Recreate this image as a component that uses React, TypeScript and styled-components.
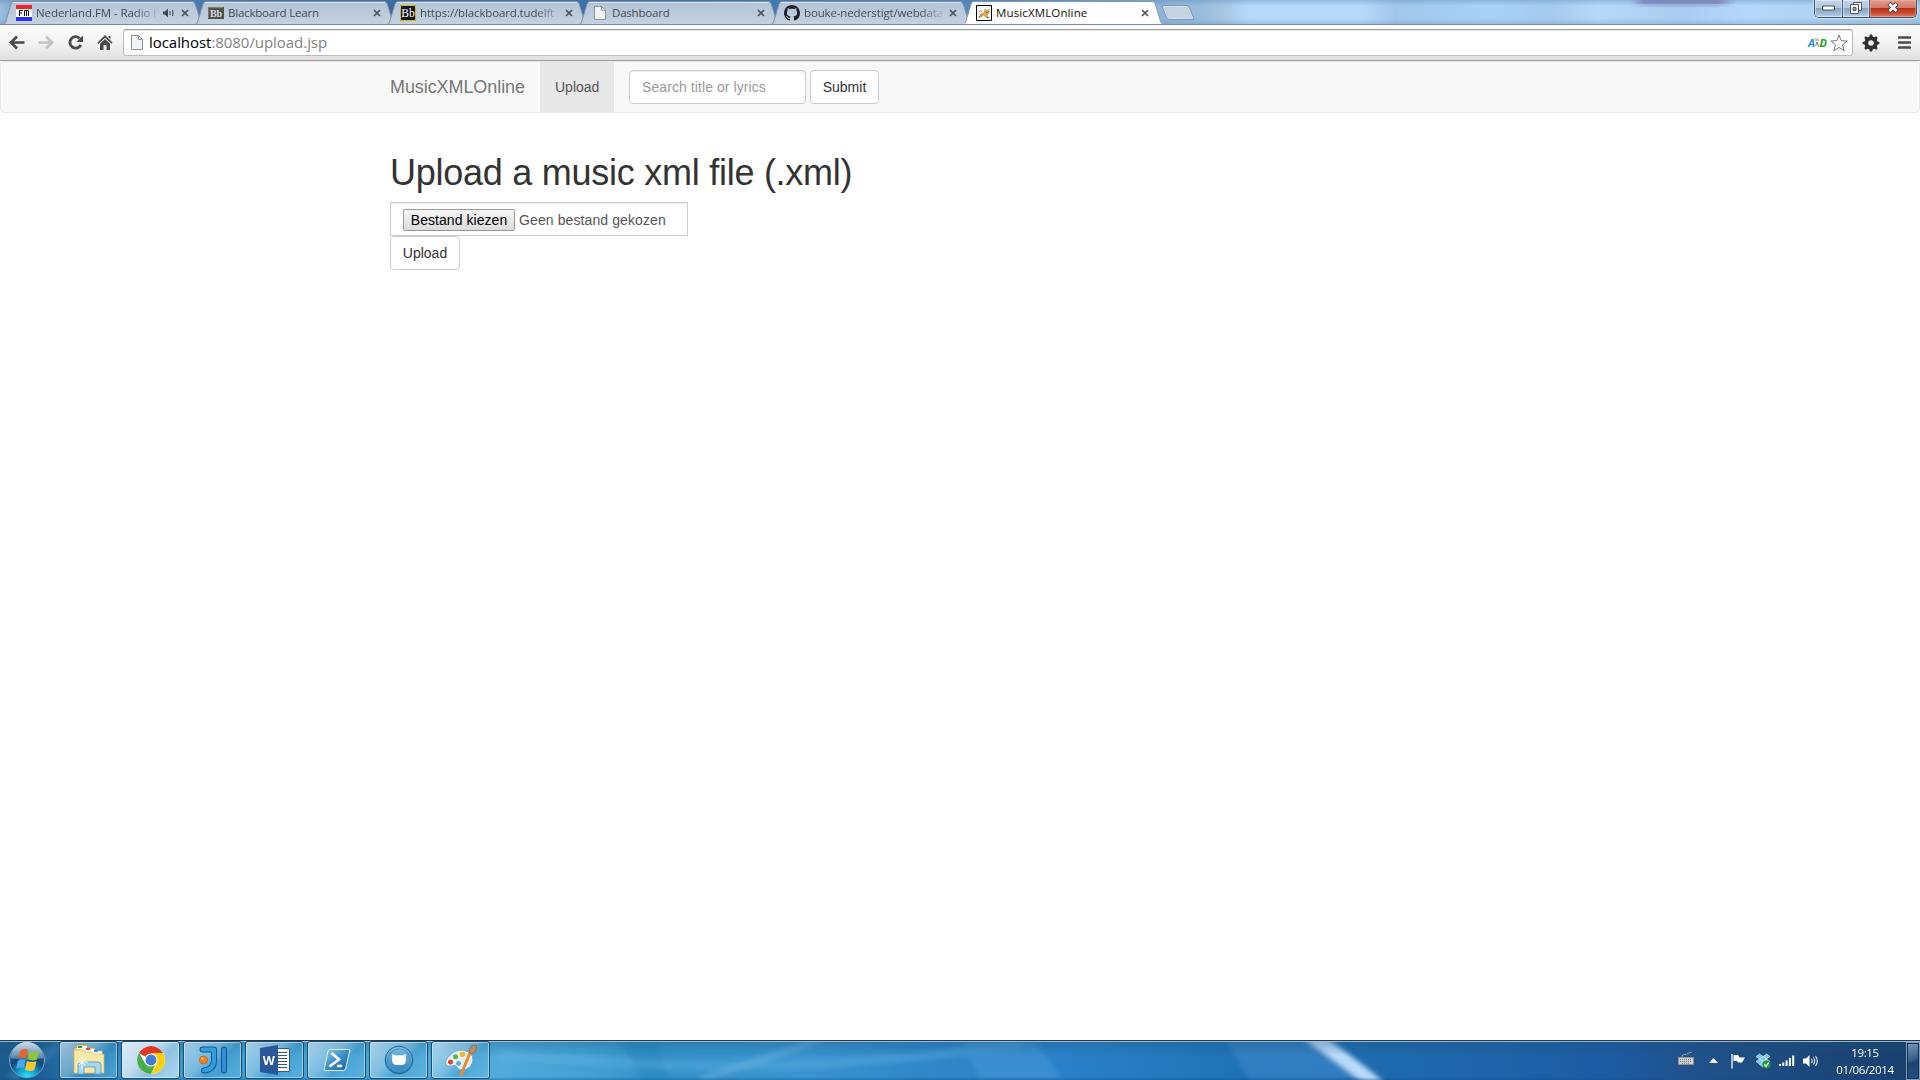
import React from "react";
import styled, { createGlobalStyle } from "styled-components";

const UI = '"Open Sans", "Noto Sans", sans-serif';
const PAGE = '"Liberation Sans", Arial, sans-serif';

const Global = createGlobalStyle`
  *, *::before, *::after { box-sizing: border-box; }
  html, body { margin: 0; padding: 0; background: #fff; overflow: hidden; }
  svg { display: block; flex: none; }
`;

const Screen = styled.div`
  display: flex;
  flex-direction: column;
  width: 1920px;
  height: 1080px;
  font-family: ${UI};
`;

/* ---------- browser frame ---------- */

const TabStrip = styled.div`
  display: flex;
  flex: none;
  height: 24px;
  padding-left: 3px;
  background:
    linear-gradient(90deg, transparent 1630px, rgba(110, 105, 165, 0.6) 1645px, rgba(110, 105, 165, 0.6) 1718px, transparent 1735px) 0 0 / 100% 4px no-repeat,
    linear-gradient(90deg, transparent 1630px, rgba(120, 125, 185, 0.3) 1650px, rgba(120, 125, 185, 0.3) 1712px, transparent 1735px) 0 4px / 100% 3px no-repeat,
    linear-gradient(180deg, rgba(70, 120, 175, 0.3), transparent 25%, transparent 75%, rgba(90, 130, 175, 0.25)),
    linear-gradient(90deg, #9dbedd 0, #83a9cd 15px, #4a7cad 190px, #39699e 400px, #3c74ad 700px, #5486b8 960px,
      #8fb6dc 1165px, #98bcde 1200px, #a6c4e0 1222px, #b6dafc 1250px, #b6dafc 1360px, #a1c7ea 1395px, #a9d2f8 1490px,
      #a5caee 1550px, #b6d8fa 1600px, #a9cdf0 1680px, #b4d8fb 1750px, #a8c8e6 1920px);
`;

const TabBox = styled.div`
  display: grid;
  grid-template-columns: 200px;
  flex: none;
  width: 200px;
  height: 24px;
  margin-right: -8px;
  & > * { grid-area: 1 / 1; }
`;

const TabRow = styled.div`
  display: flex;
  align-items: center;
  height: 24px;
  padding: 2px 14px 0 13px;
`;

const Favicon = styled.div`
  display: flex;
  justify-content: center;
  align-items: center;
  flex: none;
  width: 16px;
  height: 16px;
`;

const TabTitle = styled.div<{ $active?: boolean; $fade?: boolean; $ls: number }>`
  flex: 1;
  min-width: 0;
  margin-left: 4px;
  white-space: nowrap;
  font-size: 11.5px;
  line-height: 18px;
  letter-spacing: ${(p) => p.$ls}px;
  color: ${(p) => (p.$active ? "#111" : "#454b55")};
  ${(p) => p.$fade && "mask-image: linear-gradient(90deg, #000 calc(100% - 22px), rgba(0, 0, 0, 0.15));"}
`;

const TabEnd = styled.div<{ $gap: number }>`
  display: flex;
  align-items: center;
  gap: 7px;
  margin-left: ${(p) => p.$gap}px;
`;

const NewTab = styled.div`
  flex: none;
  width: 28px;
  height: 15px;
  margin: 5px 0 0 9px;
  transform: skewX(22deg);
  border: 1px solid #8099b4;
  border-radius: 3px;
  background: #c3d3e4;
  box-shadow: inset 0 0 0 1px #d1dfed;
`;

const WindowButtons = styled.div`
  display: flex;
  width: 103px;
  height: 18px;
  margin: 0 3px 0 auto;
  border: 1px solid #3f5169;
  border-top: 0;
  border-radius: 0 0 5px 5px;
  overflow: hidden;
  box-shadow: 0 0 0 1px rgba(225, 240, 255, 0.6);
`;

const WindowButton = styled.div<{ $w: number; $close?: boolean }>`
  display: flex;
  align-items: center;
  justify-content: center;
  width: ${(p) => p.$w}px;
  padding-bottom: 2px;
  border-right: ${(p) => (p.$close ? 0 : 1)}px solid #4d617b;
  box-shadow: inset 0 0 0 1px ${(p) => (p.$close ? "rgba(255,180,160,.5)" : "rgba(235,245,255,.55)")};
  background: ${(p) =>
    p.$close
      ? "linear-gradient(180deg, #dda092 0, #cf7a68 45%, #b8301a 50%, #c9482c 75%, #dc8168 100%)"
      : "linear-gradient(180deg, #c5d5e8 0, #b4c8de 45%, #8ba5c2 50%, #9bb6d3 75%, #bdd4ea 100%)"};
`;

const Toolbar = styled.div`
  display: flex;
  align-items: center;
  flex: none;
  height: 37px;
  padding: 0 9px 0 9px;
  border-top: 1px solid #7489a0;
  border-bottom: 1px solid #a0a0a0;
  background: linear-gradient(180deg, #fdfdfd, #f3f3f3 50%, #e0e0e0);
`;

const NavIcons = styled.div`
  display: flex;
  gap: 13.4px;
  width: 114px;
`;

const Omnibox = styled.div`
  display: flex;
  align-items: center;
  width: 1730px;
  height: 27px;
  padding: 0 4px 0 7px;
  border: 1px solid #bcbcbc;
  border-top-color: #9c9c9c;
  border-radius: 3px;
  background: #fff;
  box-shadow: inset 0 1px 0 #e8e8e8;
`;

const Address = styled.div`
  flex: 1;
  margin-left: 6px;
  padding-bottom: 1px;
  font-size: 15px;
  line-height: 21px;
  letter-spacing: -0.05px;
  color: #838383;
  white-space: nowrap;
`;

const Host = styled.span`
  color: #000;
`;

const Dictionary = styled.div`
  display: flex;
  align-items: center;
  width: 19px;
  margin-right: 3px;
  font: italic bold 11px/14px ${UI};
  color: #1a8fe0;
`;

const DictionaryTo = styled.span`
  color: #27a01d;
  margin-left: auto;
`;

const RightIcons = styled.div`
  display: flex;
  align-items: center;
  gap: 18px;
  margin-left: 9px;
`;

/* ---------- web page ---------- */

const Page = styled.div`
  flex: 1;
  background: #fff;
  font: 14px/20px ${PAGE};
  color: #333;
`;

const Navbar = styled.div`
  display: flex;
  height: 52px;
  padding-left: 374px;
  border: 1px solid #e7e7e7;
  border-radius: 4px;
  background: #f8f8f8;
`;

const Brand = styled.div`
  width: 165px;
  padding: 15px;
  font-size: 18px;
  letter-spacing: -0.08px;
  color: #777;
`;

const NavItem = styled.div`
  width: 74px;
  padding: 15px;
  background: #e7e7e7;
  color: #555;
`;

const SearchForm = styled.div`
  display: flex;
  gap: 4px;
  padding: 8px 15px;
`;

const SearchInput = styled.input`
  width: 177px;
  height: 34px;
  padding: 6px 12px;
  border: 1px solid #ccc;
  border-radius: 4px;
  background: #fff;
  box-shadow: inset 0 1px 1px rgba(0, 0, 0, 0.075);
  font: 14px/20px ${PAGE};
  letter-spacing: 0.08px;
  &::placeholder { color: #999; opacity: 1; }
`;

const Button = styled.button<{ $w: number }>`
  display: block;
  width: ${(p) => p.$w}px;
  height: 34px;
  padding: 0;
  border: 1px solid #ccc;
  border-radius: 4px;
  background: #fff;
  font: 14px/20px ${PAGE};
  color: #333;
`;

const Container = styled.div`
  width: 1170px;
  margin: 40px auto 0;
  padding: 0 15px;
`;

const Heading = styled.h1`
  margin: 0 0 9px;
  font-size: 36px;
  font-weight: 400;
  line-height: 40px;
  letter-spacing: -0.26px;
  color: #333;
`;

const FileField = styled.div`
  display: flex;
  align-items: center;
  width: 298px;
  height: 34px;
  padding: 2px 12px 0;
  border: 1px solid #ccc;
  box-shadow: inset 0 1px 1px rgba(0, 0, 0, 0.075);
  letter-spacing: 0.1px;
  color: #555;
`;

const ChooseButton = styled.div`
  width: 112px;
  height: 22px;
  margin-right: 4px;
  border: 1px solid #999;
  border-radius: 2px;
  background: linear-gradient(180deg, #f6f6f6, #dcdcdc);
  text-align: center;
  letter-spacing: 0.05px;
  color: #000;
`;

/* ---------- taskbar ---------- */

const TaskbarBox = styled.div`
  display: grid;
  flex: none;
  height: 40px;
  & > * { grid-area: 1 / 1; }
`;

const Taskbar = styled.div`
  display: flex;
  height: 40px;
  z-index: 1;
`;

const Start = styled.div`
  display: flex;
  justify-content: center;
  width: 59px;
  padding: 1px 5px 0 0;
`;

const Tasks = styled.div`
  display: flex;
  gap: 3px;
  padding-top: 1px;
`;

const Task = styled.div<{ $on?: boolean }>`
  display: flex;
  align-items: center;
  justify-content: center;
  width: 59px;
  height: 38px;
  padding: 0 0 1px 0;
  border: 1px solid #1d4b6d;
  border-radius: 3px;
  box-shadow: inset 0 0 0 1px rgba(215, 240, 255, ${(p) => (p.$on ? 0.85 : 0.55)});
  background: ${(p) =>
    p.$on
      ? "linear-gradient(135deg, #dcebf5 0, #c2dcee 40%, #8fc3e3 60%, #a9d6ee 100%)"
      : "linear-gradient(135deg, rgba(225,240,250,.65) 0, rgba(175,215,238,.5) 42%, rgba(85,170,215,.25) 60%, rgba(130,200,235,.35) 100%)"};
`;

const Tray = styled.div`
  display: flex;
  align-items: center;
  margin-left: auto;
  padding-top: 1px;
`;

const TraySlot = styled.div<{ $w: number; $up?: number }>`
  width: ${(p) => p.$w}px;
  padding-bottom: ${(p) => p.$up || 0}px;
`;

const Clock = styled.div`
  width: 82px;
  text-align: center;
  font-size: 11.5px;
  line-height: 17px;
  letter-spacing: -0.35px;
  color: #fff;
`;

const ShowDesktop = styled.div`
  width: 14px;
  height: 38px;
  border: 1px solid #7f9dbd;
  outline: 1px solid #122f50;
  outline-offset: -2px;
  background: linear-gradient(160deg, #7d98b6 0, #36608d 45%, #1c4572 55%, #234f7e);
`;

/* ---------- drawings ---------- */

const TabOutline = styled.svg`
  overflow: visible;
`;

const TabShape = ({ active }: { active?: boolean }) => (
  <TabOutline width="200" height="25" viewBox="0 0 200 25">
    <defs>
      <linearGradient id={active ? "ta" : "tb"} x1="0" y1="0" x2="0" y2="1">
        <stop offset="0" stopColor={active ? "#fff" : "#b3c4d8"} />
        <stop offset="1" stopColor={active ? "#fdfdfd" : "#c3d1e0"} />
      </linearGradient>
    </defs>
    <path
      d="M0 24.5C2 24 2.500 22.500 3 21L8 4Q9 1.500 11 1.500H189Q191.500 1.500 192.300 4L197.500 21C198 22.500 198.500 24 200 24.500"
      fill={`url(#${active ? "ta" : "tb"})`}
      stroke={active ? "#7f97b2" : "#7d92aa"}
    />
    <path d="M9.500 2.500H190" stroke="#fff" strokeOpacity=".5" />
    {active && <path d="M1 24.500H199" stroke="#fdfdfd" strokeWidth="2" />}
  </TabOutline>
);

const CloseX = () => (
  <svg width="8" height="8" viewBox="0 0 8 8">
    <path d="M1 1L7 7M7 1L1 7" stroke="#4c525b" strokeWidth="1.700" />
  </svg>
);

const Speaker = () => (
  <svg width="11" height="10" viewBox="0 0 11 10">
    <path d="M0 3.500H2L5 .5V9.500L2 6.500H0Z" fill="#3f444b" />
    <path d="M7 3V7M9.500 2Q10.500 5 9.500 8" stroke="#3f444b" fill="none" />
  </svg>
);

const FmIcon = () => (
  <svg width="16" height="16" viewBox="0 0 16 16">
    <path d="M0 0H16V16H0Z" fill="#fff" />
    <path d="M0 0H16V4H0Z" fill="#f0252c" />
    <path d="M0 12H16V16H0Z" fill="#2a2ff0" />
    <path d="M3.500 11V5.500H7M3.500 8H6M8.500 11V5.500H12.500V11M10.500 5.500V11" stroke="#111" fill="none" />
  </svg>
);

const BbGrey = () => (
  <svg width="16" height="12" viewBox="0 0 16 12">
    <path d="M0 0H16V12H0Z" fill="#50524f" />
    <path d="M.5 11V.5H15" stroke="#8a7b4c" fill="none" />
    <text x="8" y="10" fontSize="10" fontWeight="700" fontFamily="Liberation Serif" fill="#d5dbe0" textAnchor="middle">Bb</text>
  </svg>
);

const BbBlack = () => (
  <svg width="16" height="16" viewBox="0 0 16 16">
    <path d="M.5 .5H15.500V15.500H.5Z" fill="#10161d" stroke="#d8b51e" />
    <text x="8" y="12" fontSize="11.500" fontFamily="Liberation Serif" fill="#fff" textAnchor="middle">Bb</text>
  </svg>
);

const FileIcon = ({ h = 14 }: { h?: number }) => (
  <svg width="12" height={h} viewBox="0 0 12 15" preserveAspectRatio="none">
    <path d="M.5 .5H7.500L11.500 4.500V14.500H.5Z" fill="#f1f3f5" stroke="#8a8f96" />
    <path d="M7.500 .5V4.500H11.500" fill="none" stroke="#8a8f96" />
  </svg>
);

const GithubIcon = () => (
  <svg width="16" height="16" viewBox="0 0 16 16">
    <path
      fill="#1d2229"
      d="M8 0C3.580 0 0 3.580 0 8c0 3.540 2.290 6.530 5.470 7.590.4.070.55-.17.55-.38 0-.19-.01-.82-.01-1.490-2.010.37-2.530-.49-2.690-.94-.09-.23-.48-.94-.82-1.130-.28-.15-.68-.52-.01-.53.63-.01 1.080.58 1.230.82.72 1.210 1.870.87 2.330.66.07-.52.28-.87.51-1.070-1.780-.2-3.640-.89-3.640-3.950 0-.87.31-1.590.82-2.150-.08-.2-.36-1.020.08-2.120 0 0 .67-.21 2.200.82.64-.18 1.320-.27 2-.27s1.360.09 2 .27c1.530-1.040 2.200-.82 2.200-.82.44 1.100.16 1.920.08 2.120.51.56.82 1.270.82 2.150 0 3.070-1.870 3.750-3.650 3.950.29.25.54.73.54 1.480 0 1.070-.01 1.930-.01 2.200 0 .21.15.46.55.38A8.010 8.010 0 0 0 16 8c0-4.420-3.580-8-8-8z"
    />
  </svg>
);

const TomcatIcon = () => (
  <svg width="16" height="16" viewBox="0 0 16 16">
    <path d="M.5 .5H15.500V15.500H.5Z" fill="#fff" stroke="#000" />
    <path d="M2.500 12.500L5 8.500L8 7L8.500 3.500L10 4.500H12L13.500 3.500V8L11.500 10L13.500 13H10L7.500 10.500L5.500 12.500Z" fill="#d7ac58" />
    <path d="M2.500 7L4.500 5.500L6.500 7M2.500 13L5 9.500M10.500 12.500L13 13M9 6.500L11 8L13 6.500" stroke="#6b5a40" fill="none" strokeWidth=".8" />
  </svg>
);

const Arrow = ({ back }: { back?: boolean }) => (
  <svg width="16" height="15" viewBox="0 0 16 15">
    <path
      d={back ? "M8 1.500L2 7.500L8 13.500M2 7.500H15.500" : "M8 1.500L14 7.500L8 13.500M14 7.500H.5"}
      fill="none"
      stroke={back ? "#4a4a4a" : "#c3c3c3"}
      strokeWidth="2.700"
    />
  </svg>
);

const Reload = () => (
  <svg width="16" height="15" viewBox="0 0 16 15">
    <path d="M12.800 9.800A5.700 5.700 0 1 1 11.700 3.400" fill="none" stroke="#4a4a4a" strokeWidth="2.800" />
    <path d="M15 .5V7H8.500Z" fill="#4a4a4a" />
  </svg>
);

const Home = () => (
  <svg width="16" height="15" viewBox="0 0 16 15">
    <path d="M8 0L15.500 7.500L14.500 8.800L8 2.800L1.500 8.800L.5 7.500ZM11.500 1H13.500V4L11.500 2.500ZM8 4L13 8.700V15H9.500V10H6.500V15H3V8.700Z" fill="#4a4a4a" />
  </svg>
);

const Star = () => (
  <svg width="18" height="18" viewBox="0 0 18 18">
    <path d="M9 1L11.200 6.700L17.200 7L12.500 10.800L14.200 16.700L9 13.400L3.800 16.700L5.500 10.800L.8 7L6.800 6.700Z" fill="#fff" stroke="#777" strokeLinejoin="round" />
  </svg>
);

const Gear = () => (
  <svg width="18" height="18" viewBox="-9 -9 18 18">
    <circle r="4.700" fill="none" stroke="#303030" strokeWidth="3.800" />
    {[0, 45, 90, 135, 180, 225, 270, 315].map((a) => (
      <path key={a} d="M-1.800 -5.800L-1.100 -8.400H1.100L1.800 -5.800Z" fill="#303030" transform={`rotate(${a})`} />
    ))}
  </svg>
);

const MenuIcon = () => (
  <svg width="13" height="13" viewBox="0 0 13 13">
    <path d="M1 1.500H12M1 6.500H12M1 11.500H12" stroke="#4b4b4b" strokeWidth="2.600" strokeLinecap="round" />
  </svg>
);

const TaskbarBackdrop = () => (
  <svg width="1920" height="40" viewBox="0 0 1920 40">
    <defs>
      <linearGradient id="bar">
        <stop offset="0" stopColor="#1d5b8f" />
        <stop offset=".022" stopColor="#1c5f95" />
        <stop offset=".05" stopColor="#2c86bd" />
        <stop offset=".1" stopColor="#3b9bcf" />
        <stop offset=".26" stopColor="#50abdb" />
        <stop offset=".31" stopColor="#419fd2" />
        <stop offset=".34" stopColor="#3592c8" />
        <stop offset=".42" stopColor="#3a94d0" />
        <stop offset=".48" stopColor="#2f87c8" />
        <stop offset=".55" stopColor="#2b82ca" />
        <stop offset=".64" stopColor="#2073b6" />
        <stop offset=".73" stopColor="#1f69ae" />
        <stop offset=".84" stopColor="#1d5ba3" />
        <stop offset=".88" stopColor="#21528c" />
        <stop offset="1" stopColor="#173f6d" />
      </linearGradient>
      <linearGradient id="shade" x1="0" y1="0" x2="0" y2="1">
        <stop offset="0" stopColor="#1a5277" stopOpacity=".35" />
        <stop offset=".4" stopColor="#1a5277" stopOpacity="0" />
        <stop offset=".92" stopColor="#0a4f8c" stopOpacity="0" />
        <stop offset="1" stopColor="#0a4f8c" stopOpacity=".4" />
      </linearGradient>
      <filter id="soft"><feGaussianBlur stdDeviation="2.500" /></filter>
    </defs>
    <path d="M0 0H1920V40H0Z" fill="url(#bar)" />
    <g filter="url(#soft)">
      <path d="M620 0H655L670 40H640Z" fill="#2587bd" opacity=".5" />
      <path d="M820 0L700 40" stroke="#8cc8ef" strokeWidth="7" opacity=".3" />
      <path d="M500 14Q760 42 1020 4" stroke="#6db8e8" strokeWidth="9" fill="none" opacity=".3" />
      <path d="M962 0H1035L1062 40H980Z" fill="#4596d6" opacity=".6" />
      <path d="M1225 0H1305L1370 40H1250Z" fill="#3f86c9" opacity=".65" />
      <path d="M10 40L60 5" stroke="#4f93c2" strokeWidth="10" opacity=".35" />
      <path d="M1309 -6Q1346 20 1378 46" stroke="#b9daf9" strokeWidth="14" fill="none" />
    </g>
    <path d="M0 0H1920V40H0Z" fill="url(#shade)" />
    <path d="M0 .5H1920" stroke="#22384e" />
    <path d="M0 1.500H1920" stroke="#a9cbe2" strokeOpacity=".85" />
  </svg>
);

const Orb = () => (
  <svg width="38" height="38" viewBox="0 0 38 38">
    <defs>
      <radialGradient id="orb" cx=".5" cy="1" r=".95">
        <stop offset="0" stopColor="#1df0ff" />
        <stop offset=".3" stopColor="#149bd0" />
        <stop offset=".6" stopColor="#0c4678" />
        <stop offset="1" stopColor="#5b87a8" />
      </radialGradient>
      <linearGradient id="gloss" x1="0" y1="0" x2="0" y2="1">
        <stop offset="0" stopColor="#dbe8f0" stopOpacity=".85" />
        <stop offset="1" stopColor="#b8d0e0" stopOpacity=".3" />
      </linearGradient>
    </defs>
    <circle cx="19" cy="19" r="17.500" fill="url(#orb)" stroke="#75a5c4" />
    <path d="M3 17A16 16 0 0 1 35 17Q19 21 3 17Z" fill="url(#gloss)" />
    <path d="M12.500 9.500Q16 7 20 9L18 17.500Q14 15.500 10.500 17.500Z" fill="#e8622a" />
    <path d="M21.500 10Q26 12 31 9.500L29 18.500Q24.500 20.500 19.500 18Z" fill="#8cc63e" />
    <path d="M10 19.500Q14 17.500 17.500 19L15.500 27.500Q12 26 8 28Z" fill="#4aa8e8" />
    <path d="M19 20Q23.500 22 28.500 20.300L26.300 29Q21.500 31 17 28.500Z" fill="#fbc62a" />
  </svg>
);

const Explorer = () => (
  <svg width="34" height="32" viewBox="0 0 34 32">
    <path d="M2 4H5V1H15V4H23V7H30V29H3Z" fill="#f3dc8a" stroke="#b89a45" strokeWidth=".8" />
    <path d="M5 2H15V5H5Z" fill="#fff" />
    <path d="M6 2H10V4H6Z" fill="#27a53b" />
    <path d="M11 5H22V8H11Z" fill="#fff" />
    <path d="M14 4H18V6H14Z" fill="#e1442c" />
    <path d="M19 7H30V10H19Z" fill="#fff" />
    <path d="M22 6H26V8H22Z" fill="#2a8fe0" />
    <path d="M2 6H11L13 8H20L22 10H32V29H2Z" fill="#f8e8a5" stroke="#d0b562" strokeWidth=".7" />
    <path d="M6 30V21Q6 18 9 18H26Q29 18 29 21V30H23V23H12V30Z" fill="#a5d6ee" stroke="#5b9fc8" strokeWidth=".9" />
    <path d="M10 12V25M5 18H16M7 15L13 21M13 15L7 21" stroke="#fff" strokeWidth=".9" />
  </svg>
);

const Chrome = () => (
  <svg width="30" height="30" viewBox="-15 -15 30 30">
    <circle r="14" fill="#fff" />
    <path d="M0 0L-12.100 -7A14 14 0 0 1 12.100 -7H0Z" fill="#e0372b" />
    <path d="M12.100 -7A14 14 0 0 1 0 14L5.800 3.500L0 -7Z" fill="#fcd10b" />
    <path d="M0 14A14 14 0 0 1 -12.100 -7L-5.800 3.500L5 3.500Z" fill="#4aae48" />
    <circle r="6.600" fill="#f4f4f4" />
    <circle r="5.400" fill="#3f7fcf" />
  </svg>
);

const Intellij = () => (
  <svg width="30" height="30" viewBox="0 0 30 30">
    <path d="M4.500 4.500H16V15Q16 24.500 6 25.500" fill="none" stroke="#15538f" strokeWidth="6" strokeLinecap="round" strokeLinejoin="round" />
    <path d="M4.500 4.500H16V15Q16 24.500 6 25.500" fill="none" stroke="#2f9fe0" strokeWidth="4" strokeLinecap="round" strokeLinejoin="round" />
    <path d="M26 4.500V25.500" stroke="#15538f" strokeWidth="6" strokeLinecap="round" />
    <path d="M26 4.500V25.500" stroke="#2f8fd6" strokeWidth="4" strokeLinecap="round" />
    <circle cx="5.500" cy="15" r="4" fill="#f08020" stroke="#b75a14" strokeWidth=".7" />
    <circle cx="4.500" cy="13.500" r="1.300" fill="#fbc078" />
  </svg>
);

const Word = () => (
  <svg width="32" height="32" viewBox="0 0 32 32">
    <path d="M16 4.500H30.500V27.500H16Z" fill="#fff" stroke="#2b579a" />
    <path d="M19 8.500H28M19 11.500H28M19 14.500H28M19 17.500H28M19 20.500H28M19 23.500H28" stroke="#2b579a" strokeWidth="1.200" />
    <path d="M1 4L19 1V31L1 28Z" fill="#2b579a" />
    <text x="9.700" y="20.500" fontSize="12.500" fontWeight="700" fontFamily="Open Sans" fill="#fff" textAnchor="middle">W</text>
  </svg>
);

const PowerShell = () => (
  <svg width="28" height="24" viewBox="0 0 28 24">
    <defs>
      <linearGradient id="ps" x2="1" y2="1">
        <stop offset="0" stopColor="#8fc8ea" />
        <stop offset=".5" stopColor="#3a8ec8" />
        <stop offset="1" stopColor="#1b5fa8" />
      </linearGradient>
    </defs>
    <path d="M6.500 1.500H26Q27 1.500 26.700 3L22.500 21Q22 22.500 20.500 22.500H2Q1 22.500 1.300 21L5 3Q5.300 1.500 6.500 1.500Z" fill="url(#ps)" stroke="#e2f2fc" />
    <path d="M8.500 5L16 11.500L6.500 18.500M14 18H19" stroke="#fff" strokeWidth="2.500" fill="none" />
  </svg>
);

const GithubApp = () => (
  <svg width="30" height="30" viewBox="0 0 30 30">
    <defs>
      <linearGradient id="gh" x1="0" y1="0" x2="0" y2="1">
        <stop offset="0" stopColor="#7fc0e6" />
        <stop offset="1" stopColor="#2b7fb8" />
      </linearGradient>
    </defs>
    <circle cx="15" cy="15" r="13.800" fill="url(#gh)" stroke="#1e5f90" />
    <circle cx="15" cy="15" r="11" fill="none" stroke="#4b97c8" strokeWidth="1.200" />
    <path d="M8.500 9L11.500 10.500Q15 10 18.500 10.500L21.500 9Q22.300 11 21.800 13Q22.500 17 20 19.500Q15 20.700 10 19.500Q7.500 17 8.200 13Q7.700 11 8.500 9Z" fill="#fff" />
  </svg>
);

const Paint = () => (
  <svg width="34" height="34" viewBox="0 0 34 34">
    <path d="M4 14Q9 7 19 7Q29 9 29 17Q28 26 18 27Q14 27 13 24Q11 21 8 23Q2 24 1.500 20Q1.500 17 4 14Z" fill="#e4f0f8" stroke="#7ba7c4" />
    <circle cx="6.500" cy="19" r="2.500" fill="#e04434" />
    <circle cx="11.500" cy="13.800" r="2.500" fill="#55b83e" />
    <circle cx="18.500" cy="11.300" r="2.700" fill="#f2b824" />
    <circle cx="14.500" cy="20.500" r="2.400" fill="#5ba9d6" />
    <path d="M17 31.500L26 10" stroke="#e98a2c" strokeWidth="3" strokeLinecap="round" />
    <path d="M25 9L27 3Q30 2 32.500 2.500Q33 6 31 9L28 11Z" fill="#b98f62" stroke="#87623c" strokeWidth=".7" />
  </svg>
);

const Keyboard = () => (
  <svg width="16" height="15" viewBox="0 0 16 15">
    <path d="M.5 6.500H15.500V13.500H.5Z" fill="#d2d2d0" stroke="#8d9094" />
    <path d="M2 8.500H14M2 10.500H14M4 12.300H12" stroke="#6d7277" strokeDasharray="1 1" />
    <path d="M4 6Q4 3 7 3.300Q9 4 10 2.500Q11 1 13.500 1.500" stroke="#9aa0a5" fill="none" />
  </svg>
);

const TrayFlag = () => (
  <svg width="16" height="16" viewBox="0 0 16 16">
    <path d="M2 1V15.500" stroke="#fff" strokeWidth="1.300" />
    <path d="M3.500 2H8L9.500 4.500H15L12 9.500H8L7 8H3.500Z" fill="#fff" />
  </svg>
);

const Dropbox = () => (
  <svg width="16" height="16" viewBox="0 0 16 16">
    <path d="M4.500 1L8 3.500L4.500 6L1 3.500ZM11.500 1L15 3.500L11.500 6L8 3.500ZM8 3.500L11.500 6L8 8.500L4.500 6ZM4.500 6L8 8.500L4.500 11L1 8.500ZM11.500 6L15 8.500L11.500 11L8 8.500ZM4.500 11.500L8 9.500L11.500 11.500L8 14Z" fill="#7cc4f4" stroke="#c8e8fc" strokeWidth=".7" />
    <circle cx="11.500" cy="11.500" r="4" fill="#1f9a35" />
    <path d="M9.500 11.500L11 13.200L13.700 9.700" stroke="#fff" strokeWidth="1.300" fill="none" />
  </svg>
);

const Signal = () => (
  <svg width="16" height="13" viewBox="0 0 16 13">
    <path d="M0 10H2V12H0ZM3.300 8.500H5.300V12H3.300ZM6.600 6.500H8.600V12H6.600ZM9.900 4H11.900V12H9.900ZM13.200 1.500H15.200V12H13.200Z" fill="#fff" />
  </svg>
);

const Volume = () => (
  <svg width="16" height="14" viewBox="0 0 16 14">
    <path d="M0 4.500H3L6.500 1V13L3 9.500H0Z" fill="#fff" />
    <path d="M8.500 5Q9.800 7 8.500 9M10.500 3.500Q12.800 7 10.500 10.500M12.500 2Q16 7 12.500 12" stroke="#e4edf6" fill="none" strokeWidth="1.100" />
  </svg>
);

const tabs = [
  { title: "Nederland.FM - Radio l", icon: <FmIcon />, audio: true, fade: true, ls: -0.08 },
  { title: "Blackboard Learn", icon: <BbGrey />, ls: -0.2 },
  { title: "https://blackboard.tudelft", icon: <BbBlack />, fade: true, ls: -0.14 },
  { title: "Dashboard", icon: <FileIcon />, ls: -0.2 },
  { title: "bouke-nederstigt/webdata", icon: <GithubIcon />, fade: true, ls: -0.14 },
  { title: "MusicXMLOnline", icon: <TomcatIcon />, active: true, ls: 0.13 },
];

const tasks = [
  { icon: <Explorer /> },
  { icon: <Chrome />, on: true },
  { icon: <Intellij /> },
  { icon: <Word /> },
  { icon: <PowerShell /> },
  { icon: <GithubApp /> },
  { icon: <Paint /> },
];

export default function App() {
  return (
    <Screen>
      <Global />
      <TabStrip>
        {tabs.map((t) => (
          <TabBox key={t.title}>
            <TabShape active={t.active} />
            <TabRow>
              <Favicon>{t.icon}</Favicon>
              <TabTitle $active={t.active} $fade={t.fade} $ls={t.ls}>{t.title}</TabTitle>
              <TabEnd $gap={6}>
                {t.audio && <Speaker />}
                <CloseX />
              </TabEnd>
            </TabRow>
          </TabBox>
        ))}
        <NewTab />
        <WindowButtons>
          <WindowButton $w={28}>
            <svg width="13" height="6" viewBox="0 0 13 6"><path d="M.5 1H12.500V5H.5Z" fill="#fff" stroke="#4a5568" /></svg>
          </WindowButton>
          <WindowButton $w={27}>
            <svg width="12" height="12" viewBox="0 0 12 12">
              <path d="M3.500 .5H11.500V8.500H3.500Z" fill="#fff" stroke="#4a5568" />
              <path d="M.5 2.500H8.500V11.500H.5Z" fill="#fff" stroke="#4a5568" />
              <path d="M3 5.500H6V8.500H3Z" fill="#8ba5c2" stroke="#4a5568" />
            </svg>
          </WindowButton>
          <WindowButton $w={46} $close>
            <svg width="12" height="11" viewBox="0 0 12 11">
              <path d="M2 1.500L10 9.500M10 1.500L2 9.500" stroke="#4f4550" strokeWidth="4.500" />
              <path d="M2.500 2L9.500 9M9.500 2L2.500 9" stroke="#fff" strokeWidth="2.600" />
            </svg>
          </WindowButton>
        </WindowButtons>
      </TabStrip>
      <Toolbar>
        <NavIcons>
          <Arrow back />
          <Arrow />
          <Reload />
          <Home />
        </NavIcons>
        <Omnibox>
          <FileIcon h={15} />
          <Address><Host>localhost</Host>:8080/upload.jsp</Address>
          <Dictionary>
            A
            <svg width="4" height="10" viewBox="0 0 4 10"><path d="M1 0V3M2 4L.5 8M2 4L3.500 9M3 1V3" stroke="#777" fill="none" strokeWidth=".9" /></svg>
            <DictionaryTo>D</DictionaryTo>
          </Dictionary>
          <Star />
        </Omnibox>
        <RightIcons>
          <Gear />
          <MenuIcon />
        </RightIcons>
      </Toolbar>
      <Page>
        <Navbar>
          <Brand>MusicXMLOnline</Brand>
          <NavItem>Upload</NavItem>
          <SearchForm>
            <SearchInput placeholder="Search title or lyrics" />
            <Button $w={69}>Submit</Button>
          </SearchForm>
        </Navbar>
        <Container>
          <Heading>Upload a music xml file (.xml)</Heading>
          <FileField>
            <ChooseButton>Bestand kiezen</ChooseButton>
            Geen bestand gekozen
          </FileField>
          <Button $w={70}>Upload</Button>
        </Container>
      </Page>
      <TaskbarBox>
        <TaskbarBackdrop />
        <Taskbar>
          <Start><Orb /></Start>
          <Tasks>
            {tasks.map((t, i) => (
              <Task key={i} $on={t.on}>{t.icon}</Task>
            ))}
          </Tasks>
          <Tray>
            <TraySlot $w={31} $up={4}><Keyboard /></TraySlot>
            <TraySlot $w={21}>
              <svg width="9" height="5" viewBox="0 0 9 5"><path d="M4.500 0L9 5H0Z" fill="#fff" /></svg>
            </TraySlot>
            <TraySlot $w={25}><TrayFlag /></TraySlot>
            <TraySlot $w={24}><Dropbox /></TraySlot>
            <TraySlot $w={24}><Signal /></TraySlot>
            <TraySlot $w={21}><Volume /></TraySlot>
            <Clock>
              <div>19:15</div>
              <div>01/06/2014</div>
            </Clock>
            <ShowDesktop />
          </Tray>
        </Taskbar>
      </TaskbarBox>
    </Screen>
  );
}
